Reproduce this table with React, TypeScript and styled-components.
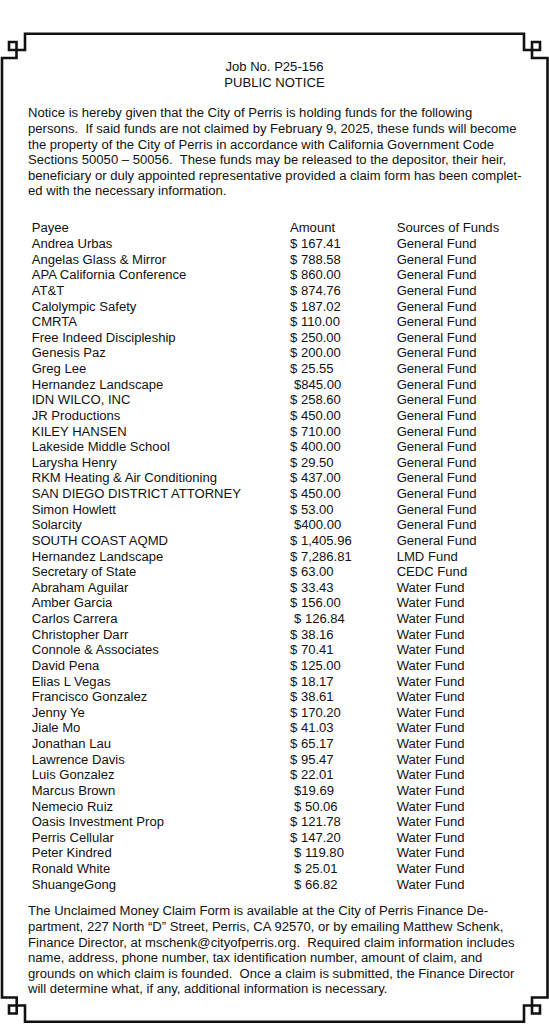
import { Fragment } from "react";
import styled, { createGlobalStyle } from "styled-components";

const GlobalStyle = createGlobalStyle`
  html, body {
    margin: 0;
    padding: 0;
    background: #ffffff;
  }
  body {
    font-family: "Liberation Sans", Arial, sans-serif;
    color: #111111;
  }
`;

const Page = styled.div`
  position: relative;
  width: 549px;
  height: 1024px;
  overflow: hidden;
  background: #ffffff;
`;

const FrameArt = styled.svg`
  position: absolute;
  left: 0;
  top: 0;
  pointer-events: none;
`;

const Content = styled.div`
  display: flex;
  flex-direction: column;
  padding: 59.2px 20px 0 28px;
  font-size: 13.08px;
`;

const Heading = styled.div`
  text-align: center;
  line-height: 15.6px;
  margin-left: -8px;
`;

const Paragraph = styled.div<{ $top: number }>`
  margin-top: ${(p) => p.$top}px;
  line-height: 15.6px;
`;

const Line = styled.div`
  white-space: pre;
`;

const Table = styled.div`
  margin-top: 21.4px;
  padding-left: 3.7px;
  display: grid;
  grid-template-columns: 258.3px 106.7px 1fr;
  grid-auto-rows: 15.64px;
  line-height: 15.64px;
`;

const Cell = styled.div`
  white-space: pre;
`;

const Amount = styled.div<{ $shifted?: boolean }>`
  white-space: pre;
  padding-left: ${(p) => (p.$shifted ? "4px" : "0")};
`;

type Entry = [string, string, string, boolean?];

const rows: Entry[] = [
  ["Andrea Urbas", "$ 167.41", "General Fund"],
  ["Angelas Glass & Mirror", "$ 788.58", "General Fund"],
  ["APA California Conference", "$ 860.00", "General Fund"],
  ["AT&T", "$ 874.76", "General Fund"],
  ["Calolympic Safety", "$ 187.02", "General Fund"],
  ["CMRTA", "$ 110.00", "General Fund"],
  ["Free Indeed Discipleship", "$ 250.00", "General Fund"],
  ["Genesis Paz", "$ 200.00", "General Fund"],
  ["Greg Lee", "$ 25.55", "General Fund"],
  ["Hernandez Landscape", "$845.00", "General Fund", true],
  ["IDN WILCO, INC", "$ 258.60", "General Fund"],
  ["JR Productions", "$ 450.00", "General Fund"],
  ["KILEY HANSEN", "$ 710.00", "General Fund"],
  ["Lakeside Middle School", "$ 400.00", "General Fund"],
  ["Larysha Henry", "$ 29.50", "General Fund"],
  ["RKM Heating & Air Conditioning", "$ 437.00", "General Fund"],
  ["SAN DIEGO DISTRICT ATTORNEY", "$ 450.00", "General Fund"],
  ["Simon Howlett", "$ 53.00", "General Fund"],
  ["Solarcity", "$400.00", "General Fund", true],
  ["SOUTH COAST AQMD", "$ 1,405.96", "General Fund"],
  ["Hernandez Landscape", "$ 7,286.81", "LMD Fund"],
  ["Secretary of State", "$ 63.00", "CEDC Fund"],
  ["Abraham Aguilar", "$ 33.43", "Water Fund"],
  ["Amber Garcia", "$ 156.00", "Water Fund"],
  ["Carlos Carrera", "$ 126.84", "Water Fund", true],
  ["Christopher Darr", "$ 38.16", "Water Fund"],
  ["Connole & Associates", "$ 70.41", "Water Fund"],
  ["David Pena", "$ 125.00", "Water Fund"],
  ["Elias L Vegas", "$ 18.17", "Water Fund"],
  ["Francisco Gonzalez", "$ 38.61", "Water Fund"],
  ["Jenny Ye", "$ 170.20", "Water Fund"],
  ["Jiale Mo", "$ 41.03", "Water Fund"],
  ["Jonathan Lau", "$ 65.17", "Water Fund"],
  ["Lawrence Davis", "$ 95.47", "Water Fund"],
  ["Luis Gonzalez", "$ 22.01", "Water Fund"],
  ["Marcus Brown", "$19.69", "Water Fund", true],
  ["Nemecio Ruiz", "$ 50.06", "Water Fund", true],
  ["Oasis Investment Prop", "$ 121.78", "Water Fund"],
  ["Perris Cellular", "$ 147.20", "Water Fund"],
  ["Peter Kindred", "$ 119.80", "Water Fund", true],
  ["Ronald White", "$ 25.01", "Water Fund", true],
  ["ShuangeGong", "$ 66.82", "Water Fund", true],
];

const intro = [
  "Notice is hereby given that the City of Perris is holding funds for the following",
  "persons.  If said funds are not claimed by February 9, 2025, these funds will become",
  "the property of the City of Perris in accordance with California Government Code",
  "Sections 50050 \u2013 50056.  These funds may be released to the depositor, their heir,",
  "beneficiary or duly appointed representative provided a claim form has been complet-",
  "ed with the necessary information.",
];

const closing = [
  "The Unclaimed Money Claim Form is available at the City of Perris Finance De-",
  "partment, 227 North \u201cD\u201d Street, Perris, CA 92570, or by emailing Matthew Schenk,",
  "Finance Director, at mschenk@cityofperris.org.  Required claim information includes",
  "name, address, phone number, tax identification number, amount of claim, and",
  "grounds on which claim is founded.  Once a claim is submitted, the Finance Director",
  "will determine what, if any, additional information is necessary.",
];

// greek-key corners on all four sides, traced as one outline
const framePath = [
  "M25 33.7 H524 V50 H540 V42 H532 V58 H547.5",
  "V997.5 H532 V1013.5 H540 V1005.5 H524 V1021.7",
  "H25 V1005.5 H9 V1013.5 H16.7 V997.5 H2",
  "V58 H16.5 V42 H9 V50 H25 Z",
].join(" ");

function Frame() {
  return (
    <FrameArt width="549" height="1024" viewBox="0 0 549 1024">
      <path
        d={framePath}
        fill="none"
        stroke="#111"
        strokeWidth="2.6"
        strokeLinejoin="miter"
      />
    </FrameArt>
  );
}

export default function App() {
  return (
    <>
      <GlobalStyle />
      <Page>
        <Frame />
        <Content>
          <Heading>
            <div>Job No. P25-156</div>
            <div>PUBLIC NOTICE</div>
          </Heading>
          <Paragraph $top={15.1}>
            {intro.map((l, i) => (
              <Line key={i}>{l}</Line>
            ))}
          </Paragraph>
          <Table>
            <Cell>Payee</Cell>
            <Cell>Amount</Cell>
            <Cell>Sources of Funds</Cell>
            {rows.map(([name, amount, source, shifted], i) => (
              <Fragment key={i}>
                <Cell>{name}</Cell>
                <Amount $shifted={shifted}>{amount}</Amount>
                <Cell>{source}</Cell>
              </Fragment>
            ))}
          </Table>
          <Paragraph $top={11.2}>
            {closing.map((l, i) => (
              <Line key={i}>{l}</Line>
            ))}
          </Paragraph>
        </Content>
      </Page>
    </>
  );
}
